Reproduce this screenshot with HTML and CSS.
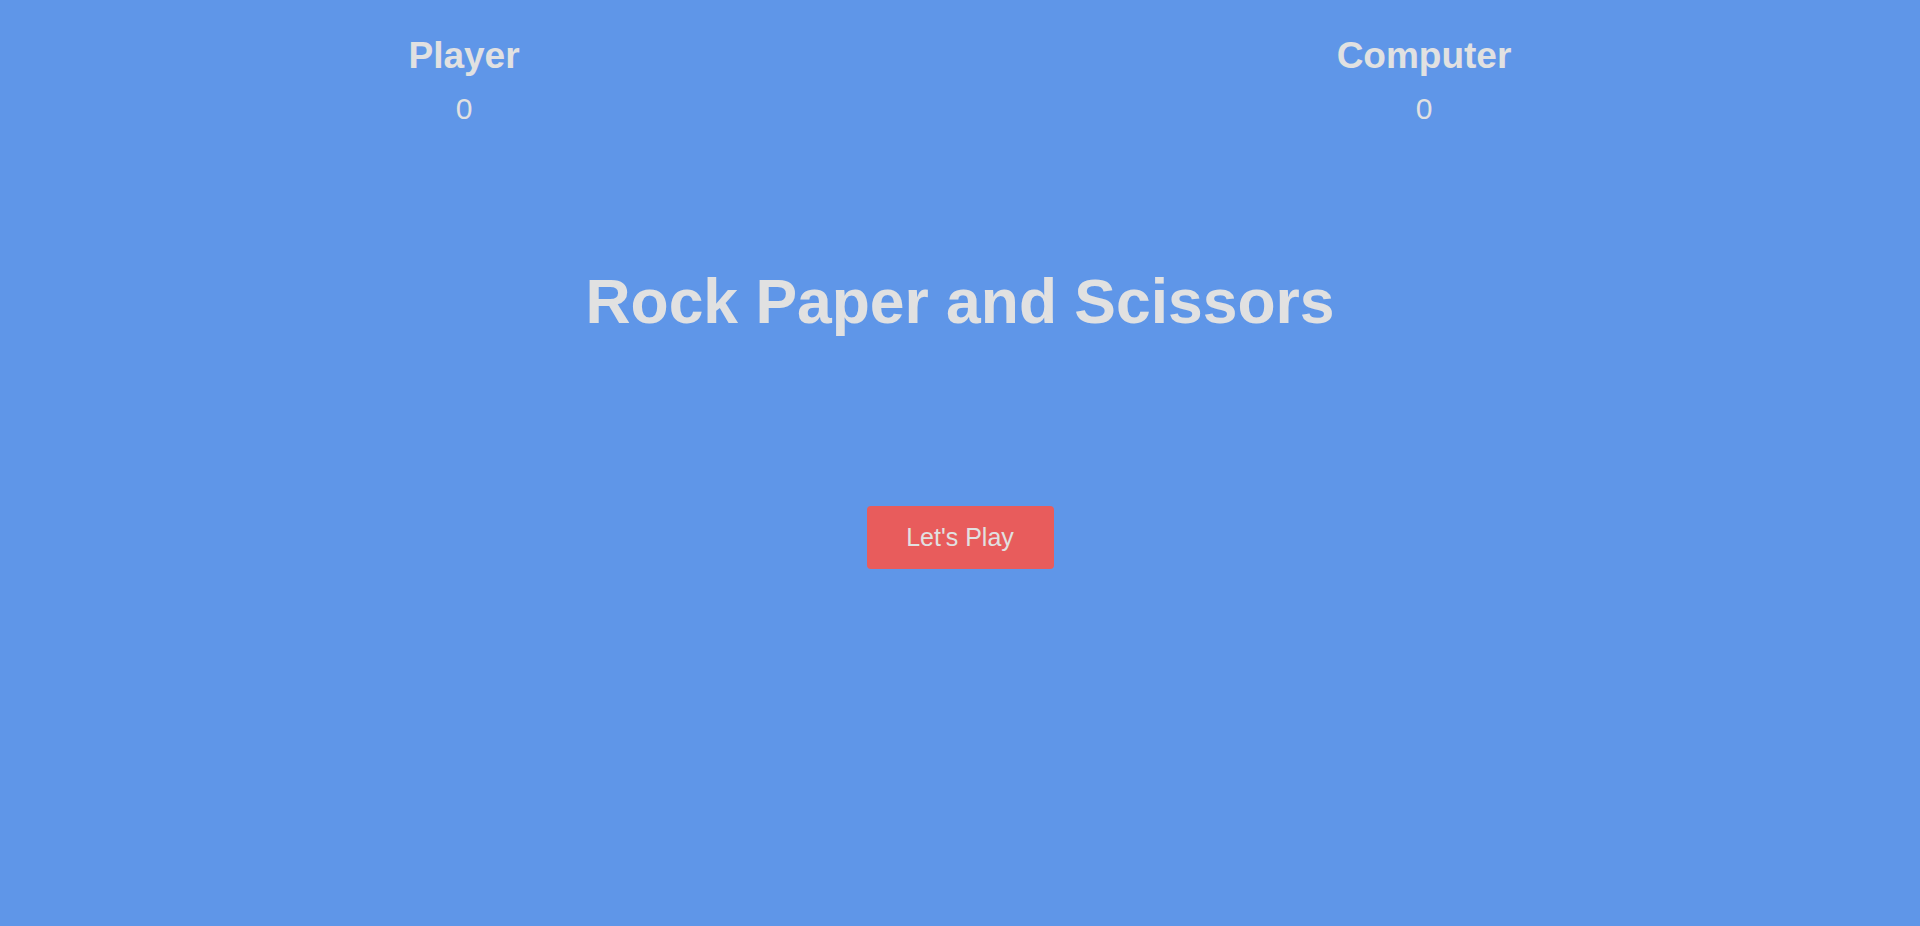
FILE: index.html
```html
<!DOCTYPE html>
<html lang="en">
<head>
<meta charset="utf-8">
<title>Rock Paper and Scissors</title>
<link rel="stylesheet" href="styles.css">
</head>
<body>
  <div class="score">
    <div class="score-col">
      <h2 class="score-name">Player</h2>
      <p class="score-value">0</p>
    </div>
    <div class="score-col">
      <h2 class="score-name">Computer</h2>
      <p class="score-value">0</p>
    </div>
  </div>
  <section class="intro">
    <h1 class="title">Rock Paper and Scissors</h1>
    <button class="play-btn">Let's Play</button>
  </section>
</body>
</html>
```

FILE: styles.css
```css
html, body {
  margin: 0;
  padding: 0;
  height: 100%;
}
body {
  background: #5f96e8;
  color: #e1e1e1;
  font-family: "Liberation Sans", Arial, sans-serif;
  overflow: hidden;
}
.score {
  display: grid;
  grid-template-columns: 1fr 1fr;
  column-gap: 32px;
  padding: 33.5px 32px 0 0;
}
.score-col {
  display: flex;
  flex-direction: column;
  align-items: center;
}
.score-name {
  margin: 0;
  font-size: 37px;
  line-height: 44px;
  font-weight: bold;
}
.score-value {
  margin: 13px 0 0;
  font-size: 30px;
  line-height: 36px;
  font-weight: normal;
}
.intro {
  display: flex;
  flex-direction: column;
  align-items: center;
}
.title {
  margin: 138.9px 0 0;
  font-size: 62.4px;
  line-height: 74px;
  font-weight: bold;
}
.play-btn {
  margin-top: 166.6px;
  width: 187px;
  padding: 16px 0;
  font-family: "Liberation Sans", Arial, sans-serif;
  font-size: 25px;
  line-height: 31px;
  color: #e1e1e1;
  background: #e85c5c;
  border: none;
  border-radius: 4px;
  cursor: pointer;
}
```
